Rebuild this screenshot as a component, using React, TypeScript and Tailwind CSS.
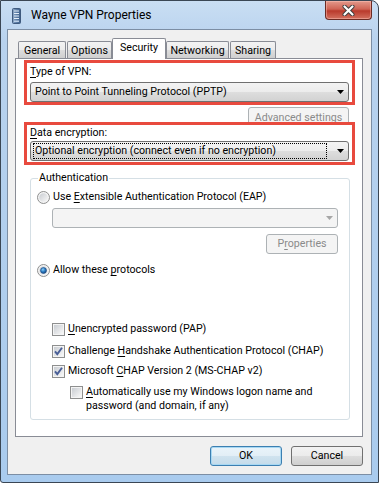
import type { ReactNode } from 'react';

function Key({ children }: { children: ReactNode }) {
  return <span className="underline decoration-1 underline-offset-[1.5px]">{children}</span>;
}

function Arrow({ disabled }: { disabled?: boolean }) {
  return (
    <svg width="7" height="4" viewBox="0 0 7 4" className="shrink-0">
      <path d="M0 0h7L3.5 4z" fill={disabled ? '#a6a6a6' : '#000'} />
    </svg>
  );
}

function Combo({ text, focused }: { text: string; focused?: boolean }) {
  return (
    <div className="flex h-[20px] items-center rounded-[3px] border border-[#707070] bg-[linear-gradient(#f3f3f3,#ececec_50%,#dedede_50%,#d2d2d2)] pl-[2px] pr-[4px]">
      <div
        className={`mr-[10px] h-[16px] flex-1 pl-[1px] leading-[14px] ${
          focused ? 'border border-dotted border-black' : 'border border-transparent'
        }`}
      >
        {text}
      </div>
      <Arrow />
    </div>
  );
}

function Button({ children, disabled, primary, className = '' }: { children: ReactNode; disabled?: boolean; primary?: boolean; className?: string }) {
  let look = 'border-[#707070] bg-[linear-gradient(#f2f2f2,#ebebeb_50%,#dddddd_50%,#cfcfcf)] text-black';
  if (disabled) look = 'border-[#adb2b5] bg-[#f4f4f4] text-[#8a8a8a]';
  if (primary) look = 'border-[#3c7fb1] bg-[linear-gradient(#eaf4fa,#e2eef6_50%,#d0e3ef_50%,#c4dbea)] text-black shadow-[inset_0_0_0_1px_#a7d8f3]';
  return (
    <div className={`flex items-center justify-center rounded-[3px] border leading-[16px] ${look} ${className}`}>
      {children}
    </div>
  );
}

function Radio({ checked }: { checked?: boolean }) {
  return (
    <svg width="13" height="13" viewBox="0 0 13 13" className="shrink-0">
      <defs>
        <linearGradient id="rg" x1="0" y1="0" x2="1" y2="1">
          <stop offset="0" stopColor="#c9cdd2" />
          <stop offset="1" stopColor="#f8f8f8" />
        </linearGradient>
        <radialGradient id="rb" cx="0.4" cy="0.35" r="0.7">
          <stop offset="0" stopColor="#8fd0f8" />
          <stop offset="0.5" stopColor="#2c7ec4" />
          <stop offset="1" stopColor="#163f78" />
        </radialGradient>
      </defs>
      <circle cx="6.5" cy="6.5" r="6" fill="#f4f4f4" stroke="#8e8f8f" />
      <circle cx="6.5" cy="6.5" r="4.3" fill="url(#rg)" />
      {checked && <circle cx="6.5" cy="6.5" r="3" fill="url(#rb)" stroke="#1b4a86" strokeWidth="0.6" />}
    </svg>
  );
}

function Check({ checked }: { checked?: boolean }) {
  return (
    <svg width="13" height="13" viewBox="0 0 13 13" className="shrink-0">
      <defs>
        <linearGradient id="cg" x1="0" y1="0" x2="1" y2="1">
          <stop offset="0" stopColor="#c9cdd2" />
          <stop offset="1" stopColor="#f8f8f8" />
        </linearGradient>
      </defs>
      <rect x="0.5" y="0.5" width="12" height="12" fill="#f4f4f4" stroke="#8e8f8f" />
      <rect x="2" y="2" width="9" height="9" fill="url(#cg)" />
      {checked && <path d="M3 6.3l2.3 2.8L10 2.8" fill="none" stroke="#4a5f97" strokeWidth="1.9" />}
    </svg>
  );
}

const tabs = [
  { name: 'General', w: 'w-[48px] mr-[1px]' },
  { name: 'Options', w: 'w-[45px]' },
  { name: 'Security', w: 'w-[54px]', active: true },
  { name: 'Networking', w: 'w-[63px] mr-[1px]' },
  { name: 'Sharing', w: 'w-[46px]' },
];

export default function App() {
  return (
    <div className="h-[483px] w-[379px] font-[Roboto] text-[10.65px] text-black">
      <div className="flex h-full flex-col rounded-tr-[8px] rounded-bl-[3px] border border-[#3a4654] bg-[linear-gradient(#c9def3,#b8d2ee_40px,#a9cbee)]">
        {/* title bar */}
        <div className="flex h-[28px] shrink-0 items-start">
          <svg width="9" height="16" viewBox="0 0 9 16" className="ml-[11px] mt-[7px]">
            <defs>
              <linearGradient id="ic" x1="0" y1="0" x2="1" y2="0">
                <stop offset="0" stopColor="#8ea8c6" />
                <stop offset="0.5" stopColor="#5d7fa8" />
                <stop offset="1" stopColor="#3d5e88" />
              </linearGradient>
            </defs>
            <rect x="0.5" y="0.5" width="8" height="15" rx="1" fill="url(#ic)" stroke="#3f5a7e" />
            <path d="M2 3h5M2 5.5h5M2 8h5M2 10.5h5" stroke="#e4eef8" strokeWidth="1" />
            <rect x="2" y="12.5" width="5" height="1.5" fill="#bcd0e6" />
          </svg>
          <div className="ml-[10px] mt-[6px] text-[12px] leading-[16px]">Wayne VPN Properties</div>
          <div className="ml-auto mr-[6px] flex h-[19px] w-[47px] items-center justify-center rounded-b-[4px] border border-t-0 border-[#6b2b24] bg-[linear-gradient(#e39a8c,#cf6455_45%,#b93a2c_55%,#d3705f)] shadow-[inset_0_0_0_1px_rgba(255,200,190,0.45)]">
            <svg width="15" height="11" viewBox="0 0 15 11">
              <path d="M3.5 1.5l8 8M11.5 1.5l-8 8" stroke="#3b3b3b" strokeWidth="4" strokeLinecap="round" />
              <path d="M3.5 1.5l8 8M11.5 1.5l-8 8" stroke="#ffffff" strokeWidth="2.2" strokeLinecap="round" />
            </svg>
          </div>
        </div>

        {/* client area */}
        <div className="mx-[6px] mb-[7px] flex h-[446px] flex-col border border-[#7c8ea4] bg-[#f0f0f0]">
          {/* tabs */}
          <div className="flex items-end pl-[10px] pt-[8px]">
            {tabs.map((t) =>
              t.active ? (
                <div
                  key={t.name}
                  className={`relative z-10 -mb-px flex h-[21px] justify-center rounded-t-[2px] border border-b-0 border-[#898c95] bg-white pt-[1px] leading-[16px] ${t.w}`}
                >
                  {t.name}
                </div>
              ) : (
                <div
                  key={t.name}
                  className={`flex h-[17px] items-center justify-center rounded-t-[2px] border border-b-0 border-[#898c95] bg-[linear-gradient(#f3f3f3,#ebebeb_50%,#dddddd_50%,#cfcfcf)] leading-[15px] ${t.w}`}
                >
                  {t.name}
                </div>
              ),
            )}
          </div>

          {/* tab page */}
          <div className="ml-[7px] mr-[8px] flex h-[379px] flex-col border border-[#898c95] bg-white">
            <div className="ml-[8px] mr-[7px] mt-[1px] flex flex-col border-[3px] border-[#e84a3e] px-[3px] pt-[1px]">
              <div className="h-[16px] leading-[16px]">
                <Key>T</Key>ype of VPN:
              </div>
              <div className="mt-[2px]">
                <Combo text="Point to Point Tunneling Protocol (PPTP)" />
              </div>
            </div>

            <Button disabled className="mr-[13px] mt-[2px] h-[21px] w-[101px] self-end">
              Advanced settings
            </Button>

            <div className="relative z-10 ml-[8px] mr-[7px] -mt-[6px] flex flex-col border-[3px] border-[#e84a3e] bg-white px-[3px] pb-[1px]">
              <div className="h-[15px] leading-[15px]">
                <Key>D</Key>ata encryption:
              </div>
              <div className="mt-[1px]">
                <Combo text="Optional encryption (connect even if no encryption)" focused />
              </div>
            </div>

            <fieldset className="ml-[14px] mr-[12px] mt-[5px] flex flex-col rounded-[3px] border border-[#d5dfe5] pb-[6px] pl-[6px] pr-[11px]">
              <legend className="ml-[1px] px-[1px] leading-[16px]">Authentication</legend>

              <div className="mt-[3px] flex h-[16px] items-center gap-[3px]">
                <Radio />
                <span>
                  Use <Key>E</Key>xtensible Authentication Protocol (EAP)
                </span>
              </div>

              <div className="ml-[15px] mt-[3px] flex h-[20px] items-center justify-end rounded-[3px] border border-[#adb2b5] bg-[#f4f4f4] pr-[4px]">
                <Arrow disabled />
              </div>

              <Button disabled className="mt-[6px] h-[20px] w-[72px] self-end">
                P<Key>r</Key>operties
              </Button>

              <div className="mt-[8px] flex h-[16px] items-center gap-[3px]">
                <Radio checked />
                <span>
                  Allow these <Key>p</Key>rotocols
                </span>
              </div>

              <div className="ml-[15px] mt-[43px] flex h-[16px] items-center gap-[3px]">
                <Check />
                <span>
                  <Key>U</Key>nencrypted password (PAP)
                </span>
              </div>

              <div className="ml-[15px] mt-[6px] flex h-[16px] items-center gap-[3px]">
                <Check checked />
                <span>
                  Challenge <Key>H</Key>andshake Authentication Protocol (CHAP)
                </span>
              </div>

              <div className="ml-[15px] mt-[4px] flex h-[16px] items-center gap-[3px]">
                <Check checked />
                <span>
                  Microsoft <Key>C</Key>HAP Version 2 (MS-CHAP v2)
                </span>
              </div>

              <div className="ml-[33px] mt-[6px] flex items-start gap-[3px]">
                <div className="mt-[1px]">
                  <Check />
                </div>
                <span className="whitespace-nowrap leading-[14px]">
                  <Key>A</Key>utomatically use my Windows logon name and
                  <br />
                  password (and domain, if any)
                </span>
              </div>
            </fieldset>
          </div>

          {/* dialog buttons */}
          <div className="mt-[9px] flex justify-end gap-[9px] pr-[8px]">
            <Button primary className="h-[20px] w-[72px]">
              OK
            </Button>
            <Button className="h-[20px] w-[72px]">Cancel</Button>
          </div>
        </div>
      </div>
    </div>
  );
}
